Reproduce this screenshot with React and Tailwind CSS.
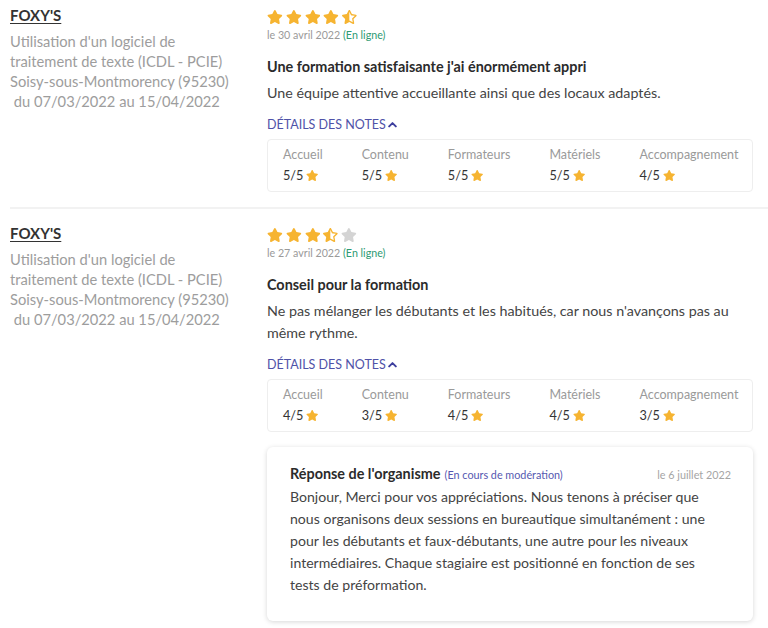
import React from "react";

const STAR = "M259.3 17.8L194 150.2 47.9 171.5c-26.2 3.8-36.7 36.1-17.7 54.6l105.7 103-25 145.5c-4.5 26.3 23.2 46 46.4 33.7L288 439.6l130.7 68.7c23.2 12.2 50.9-7.4 46.4-33.7l-25-145.5 105.7-103c19-18.5 8.5-50.8-17.7-54.6L382 150.2 316.7 17.8c-11.7-23.6-45.6-23.9-57.4 0z";
const HALF = "M508.55 171.51L362.18 150.2 296.77 17.81C290.89 5.98 279.42 0 267.95 0c-11.4 0-22.790 5.9-28.69 17.81l-65.43 132.38-146.38 21.29c-26.25 3.8-36.77 36.09-17.74 54.590l105.89 103-25.06 145.48C86.98 495.330 103.57 512 122.15 512c4.93 0 10-1.17 14.870-3.75l130.95-68.68 130.94 68.7c4.86 2.55 9.92 3.71 14.83 3.71 18.6 0 35.22-16.61 31.66-37.4l-25.03-145.49 105.91-102.98c19.04-18.5 8.52-50.8-17.73-54.6zm-121.74 123.2l-18.12 17.62 4.280 24.88 19.52 113.45-102.13-53.59-22.38-11.74.03-317.19 51.03 103.29 11.18 22.63 25.01 3.64 114.23 16.63-82.65 80.38z";

function Star({ type, size = 14 }) {
  if (type === "half") {
    return (
      <svg viewBox="0 0 536 512" width={size * 1.05} height={size} className="block">
        <path d={HALF} fill="#f6b431" />
      </svg>
    );
  }
  return (
    <svg viewBox="0 0 576 512" width={size * 1.125} height={size} className="block">
      <path d={STAR} fill={type === "empty" ? "#d4d4d4" : "#f6b431"} />
    </svg>
  );
}

function Stars({ value }) {
  const items = [];
  for (let i = 1; i <= 5; i++) {
    if (value >= i) items.push("full");
    else if (value >= i - 0.5) items.push("half");
    else items.push("empty");
  }
  return (
    <div className="flex items-center gap-[3px] h-[14px]">
      {items.map((t, i) => (
        <Star key={i} type={t} />
      ))}
    </div>
  );
}

function Chevron() {
  return (
    <svg viewBox="0 0 10 8" width="9" height="7" className="inline-block ml-[2px] mb-[2px]">
      <polyline points="1.2,6.2 5,2.4 8.8,6.2" fill="none" stroke="#3d3f9e" strokeWidth="2.2" strokeLinecap="round" strokeLinejoin="round" />
    </svg>
  );
}

function Details({ notes }) {
  return (
    <>
      <div className="mt-[12px] text-[12.5px] leading-[18px] text-[#4f52a8] uppercase">
        Détails des notes<Chevron />
      </div>
      <div className="mt-[5px] border border-[#eeeeee] rounded-[4px] pl-[15px] pt-[6px] pb-[7px] flex gap-[39px]">
        {notes.map(([label, v]) => (
          <div key={label} className="flex flex-col">
            <div className="text-[12.5px] leading-[18px] text-[#9a9a9a]">{label}</div>
            <div className="mt-[2px] text-[12.7px] leading-[18px] text-[#333] flex items-center gap-[3px]">
              {v}/5 <Star size={11} />
            </div>
          </div>
        ))}
      </div>
    </>
  );
}

function Review({ first, rating, date, title, body, notes, children }) {
  return (
    <div
      className={
        "flex " +
        (first ? "pt-[5px] pb-[15px] border-b-2 border-[#f2f2f2]" : "pt-[14px] pb-[17px]")
      }
    >
      <div className="w-[257px] shrink-0 pr-[34px]">
        <div className="text-[15px] leading-[20px] font-bold text-[#333] underline underline-offset-2">
          FOXY'S
        </div>
        <div className="mt-[6px] text-[14.7px] leading-[20px] text-[#9d9d9d]">
          <div>Utilisation d'un logiciel de traitement de texte (ICDL - PCIE)</div>
          <div>Soisy-sous-Montmorency (95230)</div>
          <div>{"\u00a0"}du 07/03/2022 au 15/04/2022</div>
        </div>
      </div>
      <div className="w-[486px] shrink-0">
        <div className="mt-[5px]">
          <Stars value={rating} />
        </div>
        <div className="mt-[3px] text-[10.7px] leading-[16px] text-[#9a9a9a]">
          {date} <span className="text-[#2e9a73]">(En ligne)</span>
        </div>
        <div className="mt-[13px] text-[14.4px] leading-[22px] font-bold text-[#2b2b2b]">{title}</div>
        <div className="mt-[4px] text-[14.3px] leading-[22px] text-[#444]">{body}</div>
        <Details notes={notes} />
        {children}
      </div>
    </div>
  );
}

export default function App() {
  return (
    <div
      className="bg-white w-[768px] h-[628px] overflow-hidden pl-[10px]"
      style={{ fontFamily: "Lato, 'Noto Sans', sans-serif" }}
    >
      <Review
        first
        rating={4.5}
        date="le 30 avril 2022"
        title="Une formation satisfaisante j'ai énormément appri"
        body="Une équipe attentive accueillante ainsi que des locaux adaptés."
        notes={[
          ["Accueil", 5],
          ["Contenu", 5],
          ["Formateurs", 5],
          ["Matériels", 5],
          ["Accompagnement", 4],
        ]}
      />
      <Review
        rating={3.5}
        date="le 27 avril 2022"
        title="Conseil pour la formation"
        body="Ne pas mélanger les débutants et les habitués, car nous n'avançons pas au même rythme."
        notes={[
          ["Accueil", 4],
          ["Contenu", 3],
          ["Formateurs", 4],
          ["Matériels", 4],
          ["Accompagnement", 3],
        ]}
      >
        <div className="mt-[15px] rounded-[6px] bg-white shadow-[0_1px_5px_rgba(0,0,0,0.16)] pl-[23px] pr-[22px] pt-[15px] pb-[25px]">
          <div className="flex items-baseline justify-between leading-[22px]">
            <div>
              <span className="text-[14.4px] font-bold text-[#2b2b2b]">Réponse de l'organisme</span>{" "}
              <span className="text-[10.8px] text-[#5558b0]">(En cours de modération)</span>
            </div>
            <div className="text-[10.8px] text-[#a5a5a5]">le 6 juillet 2022</div>
          </div>
          <div className="text-[14.1px] leading-[22px] text-[#444] pr-[8px]">
            Bonjour, Merci pour vos appréciations. Nous tenons à préciser que nous organisons deux sessions en bureautique simultanément : une pour les débutants et faux-débutants, une autre pour les niveaux intermédiaires. Chaque stagiaire est positionné en fonction de ses tests de préformation.
          </div>
        </div>
      </Review>
    </div>
  );
}
